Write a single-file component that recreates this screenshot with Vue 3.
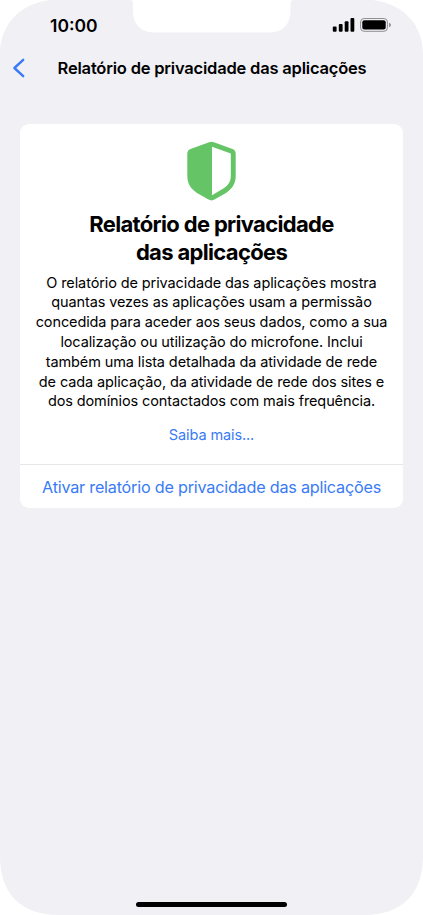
<script setup>
const heading = ["Relatório de privacidade", "das aplicações"];

const description = [
  "O relatório de privacidade das aplicações mostra",
  "quantas vezes as aplicações usam a permissão",
  "concedida para aceder aos seus dados, como a sua",
  "localização ou utilização do microfone. Inclui",
  "também uma lista detalhada da atividade de rede",
  "de cada aplicação, da atividade de rede dos sites e",
  "dos domínios contactados com mais frequência.",
];
</script>

<template>
  <div class="screen">
    <svg class="frame" viewBox="0 0 423 915">
      <path
        class="frame-body"
        d="M50 0H130Q133 0 133 3V11C133 24 141 32.5 155 32.5H269C283 32.5 290.500 24 290.500 11V3Q290.500 0 293.500 0H373C404 4 423 25 423 54V856C423 894 402 915 364 915H59C21 915 0 894 0 856V54C0 25 19 4 50 0Z"
      />
    </svg>

    <header class="status-bar">
      <span class="time">10:00</span>
      <svg class="status-icons" viewBox="0 0 60 16">
        <rect x="0.800" y="9.500" width="3.800" height="5.300" rx="1" />
        <rect x="6.800" y="7" width="3.800" height="7.800" rx="1" />
        <rect x="12.700" y="4.200" width="3.800" height="10.600" rx="1" />
        <rect x="18.500" y="1" width="3.800" height="13.800" rx="1" />
        <rect class="battery-shell" x="28.600" y="1.500" width="26.800" height="12.800" rx="3.500" />
        <rect x="30.300" y="3.200" width="23.400" height="9.400" rx="2" />
        <path class="battery-tip" d="M57 5.800Q59 6.500 59 8T57 10.200Z" />
      </svg>
    </header>

    <nav class="nav-bar">
      <button class="back" aria-label="Voltar">
        <svg viewBox="0 0 14 20">
          <path d="M11.200 1.800L2.400 10L11.200 18.200" />
        </svg>
      </button>
      <h1 class="title">Relatório de privacidade das aplicações</h1>
    </nav>

    <main class="card">
      <section class="intro">
        <svg class="shield" viewBox="0.500 0 50 60">
          <path
            fill-rule="evenodd"
            d="M22.600 1.200Q25 .3 27.400 1.200L46 8Q49.200 9.300 49.200 12.800V34.500C49.200 43 45.800 47.500 39.500 52L28 58.600Q25 60.200 22 58.600L10.500 52C4.200 47.500.8 43 .8 34.500V12.800Q.8 9.300 4 8ZM25.500 5.800V54.300L37.200 47.300C42.300 43.800 44.300 40.500 44.300 34.500V12.600Z"
          />
        </svg>
        <h2 class="heading">
          <span v-for="line in heading" :key="line">{{ line }}</span>
        </h2>
        <p class="description">
          <span v-for="line in description" :key="line">{{ line }}</span>
        </p>
        <a class="more">Saiba mais...</a>
      </section>
      <button class="activate">Ativar relatório de privacidade das aplicações</button>
    </main>

    <div class="home-indicator"></div>
  </div>
</template>

<style>
body {
  margin: 0;
  background: #fff;
}
</style>

<style scoped>
.screen {
  position: relative;
  display: flex;
  flex-direction: column;
  width: 423px;
  height: 915px;
  overflow: hidden;
  font-family: Inter, "Liberation Sans", sans-serif;
  color: #000;
}

.frame {
  position: absolute;
  inset: 0;
  width: 423px;
  height: 915px;
  z-index: -1;
}

.frame-body {
  fill: #f1f0f5;
}

.status-bar {
  display: flex;
  justify-content: space-between;
  align-items: center;
  box-sizing: border-box;
  height: 50px;
  padding: 0 31px 0 50px;
}

.time {
  font-size: 17.5px;
  font-weight: 600;
}

.status-icons {
  width: 60px;
  height: 16px;
}

.battery-shell {
  fill: none;
  stroke: #8f8f92;
}

.battery-tip {
  fill: #8f8f92;
}

.nav-bar {
  display: flex;
  align-items: center;
  height: 36px;
}

button {
  padding: 0;
  border: none;
  background: none;
  font-family: inherit;
}

.back {
  width: 36px;
  height: 36px;
  padding-left: 12px;
}

.back svg {
  display: block;
  width: 14px;
  height: 20px;
}

.back path {
  fill: none;
  stroke: #397bf5;
  stroke-width: 2.4;
  stroke-linecap: round;
  stroke-linejoin: round;
}

.title {
  flex: 1;
  margin: 0 35px 0 0;
  font-size: 16.5px;
  font-weight: 600;
  letter-spacing: -0.2px;
  text-align: center;
  white-space: nowrap;
}

.card {
  display: flex;
  flex-direction: column;
  box-sizing: border-box;
  width: 383px;
  height: 384px;
  margin: 38.4px 0 0 20px;
  border-radius: 9px;
  background: #fff;
}

.intro {
  display: flex;
  flex-direction: column;
  align-items: center;
  box-sizing: border-box;
  height: 341px;
  padding-top: 16.6px;
  border-bottom: 1px solid #e7e7e9;
}

.shield {
  width: 50px;
  height: 60px;
  fill: #65c466;
}

.heading {
  margin: 9.4px 0 0;
  font-size: 22px;
  font-weight: 700;
  line-height: 28px;
  letter-spacing: -0.67px;
}

.heading span,
.description span {
  display: block;
  text-align: center;
  white-space: nowrap;
}

.description {
  margin: 6.200px 0 0;
  font-size: 14.5px;
  line-height: 19.8px;
  letter-spacing: -0.11px;
}

.more {
  margin-top: 14px;
  font-size: 14.5px;
  line-height: 20px;
  letter-spacing: -0.11px;
  color: #397bf5;
}

.activate {
  flex: 1;
  font-size: 16.2px;
  letter-spacing: -0.22px;
  white-space: nowrap;
  color: #397bf5;
}

.home-indicator {
  width: 151px;
  height: 5px;
  margin: auto auto 8px;
  border-radius: 3px;
  background: #000;
}
</style>
